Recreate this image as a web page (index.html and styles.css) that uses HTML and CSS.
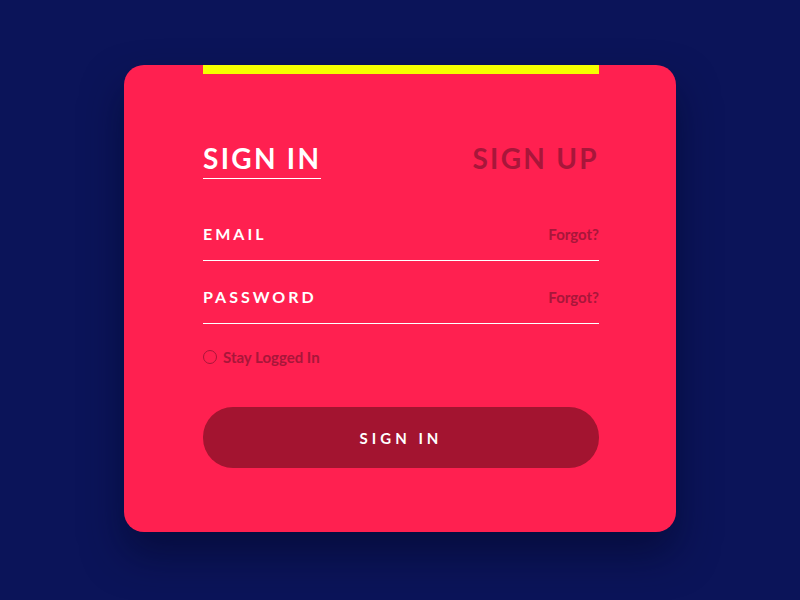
FILE: index.html
```html
<!DOCTYPE html>
<html>
<head>
<meta charset="utf-8">
<link rel="stylesheet" href="styles.css">
</head>
<body>
<div class="card">
  <div class="accent"></div>
  <div class="tabs">
    <span class="tab active">SIGN IN</span>
    <span class="tab">SIGN UP</span>
  </div>
  <div class="field first">
    <span class="label">EMAIL</span>
    <span class="forgot">Forgot?</span>
  </div>
  <div class="field">
    <span class="label">PASSWORD</span>
    <span class="forgot">Forgot?</span>
  </div>
  <div class="remember">
    <span class="radio"></span>
    <span class="remember-text">Stay Logged In</span>
  </div>
  <div class="button">SIGN IN</div>
</div>
</body>
</html>
```
FILE: styles.css
```css
html, body {
  margin: 0;
  padding: 0;
}
body {
  background: #0b1459;
  width: 800px;
  height: 600px;
  overflow: hidden;
  font-family: Lato, "Liberation Sans", sans-serif;
}
.card {
  box-sizing: border-box;
  width: 552px;
  height: 467px;
  margin: 65px auto 0;
  background: #ff2050;
  border-radius: 20px;
  padding: 0 77px 0 79px;
  box-shadow: 0 22px 40px rgba(3, 8, 40, 0.55);
}
.accent {
  height: 9px;
  background: #f6ff00;
}
.tabs {
  display: flex;
  justify-content: space-between;
  margin-top: 67px;
}
.tab {
  font-size: 28px;
  font-weight: 700;
  letter-spacing: 2.3px;
  line-height: 34px;
  color: #a8163a;
  padding-bottom: 3px;
}
.tab.active {
  color: #ffffff;
  border-bottom: 1.5px solid #ffffff;
}
.field {
  display: flex;
  justify-content: space-between;
  align-items: baseline;
  border-bottom: 1px solid #ffffff;
  padding-bottom: 16px;
  margin-top: 26px;
}
.field.first {
  margin-top: 45px;
}
.label {
  font-size: 16px;
  font-weight: 700;
  letter-spacing: 3px;
  color: #ffffff;
  line-height: 20px;
}
.forgot {
  font-size: 15px;
  font-weight: 700;
  color: #a8163a;
}
.remember {
  display: flex;
  align-items: center;
  gap: 6px;
  margin-top: 24px;
}
.radio {
  width: 12px;
  height: 12px;
  border: 1.5px solid #a8163a;
  border-radius: 50%;
}
.remember-text {
  font-size: 15px;
  font-weight: 700;
  color: #a8163a;
}
.button {
  margin-top: 41px;
  height: 61px;
  border-radius: 30px;
  background: #a31430;
  color: #ffffff;
  display: flex;
  align-items: center;
  justify-content: center;
  font-size: 15px;
  font-weight: 700;
  letter-spacing: 4px;
}
```
